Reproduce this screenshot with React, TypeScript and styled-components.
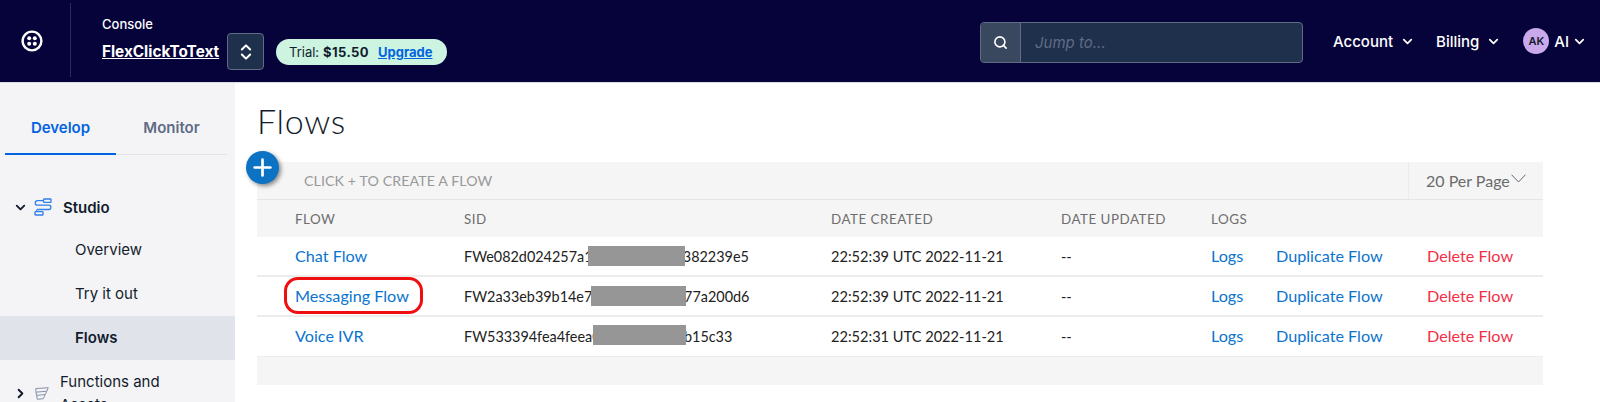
import React from "react";
import styled, { createGlobalStyle } from "styled-components";
import { ChevronDown, ChevronRight, ChevronsUpDown, Search, Plus } from "lucide-react";

const Global = createGlobalStyle`
  html, body { margin: 0; padding: 0; background: #fff; }
  body { width: 1600px; height: 402px; overflow: hidden; font-family: Inter, "Liberation Sans", sans-serif; }
  * { box-sizing: border-box; }
`;

const Page = styled.div`
  width: 1600px;
  height: 402px;
  display: flex;
  flex-direction: column;
  overflow: hidden;
`;

const TopBar = styled.header`
  flex: 0 0 83px;
  height: 83px;
  background: #06033a;
  border-bottom: 1px solid #dcdde4;
  display: flex;
  align-items: flex-start;
  color: #fff;
`;

const LogoCell = styled.div`
  width: 71px;
  height: 74px;
  margin-top: 3px;
  border-right: 1px solid #2b2c5a;
  display: flex;
  align-items: center;
  justify-content: center;
  padding: 2px 6px 0 0;
`;

const AccountBlock = styled.div`
  padding: 17px 0 0 31px;
  width: 909px;
  display: flex;
  flex-direction: column;
`;

const ConsoleLabel = styled.div`
  font-size: 13px;
  font-weight: 500;
  line-height: 14px;
`;

const AccountRow = styled.div`
  display: flex;
  align-items: center;
  margin-top: 2px;
`;

const AccountName = styled.a`
  font-size: 15.3px;
  font-weight: 700;
  text-decoration: underline;
  width: 119px;
  white-space: nowrap;
`;

const Switcher = styled.div`
  width: 37px;
  height: 37px;
  margin-left: 6px;
  background: #1f304c;
  border: 1px solid #606b85;
  border-radius: 4px;
  display: flex;
  align-items: center;
  justify-content: center;
`;

const TrialPill = styled.div`
  margin-left: 12px;
  height: 26px;
  width: 171px;
  padding-left: 13px;
  border-radius: 13px;
  background: #ccf4e0;
  color: #121c2d;
  font-size: 13px;
  display: flex;
  align-items: center;
  white-space: nowrap;
  strong { font-weight: 700; margin-left: 4px; font-size: 13px; letter-spacing: .4px; }
  a { color: #0263e0; font-weight: 700; text-decoration: underline; margin-left: 9px; }
`;

const SearchBox = styled.div`
  width: 323px;
  height: 41px;
  margin-top: 22px;
  border: 1px solid #606b85;
  border-radius: 4px;
  background: #1f304c;
  display: flex;
  overflow: hidden;
`;

const SearchIconCell = styled.div`
  width: 40px;
  background: #39475f;
  border-right: 1px solid #606b85;
  display: flex;
  align-items: center;
  justify-content: center;
`;

const SearchText = styled.div`
  padding-left: 14px;
  font-size: 15px;
  font-style: italic;
  color: #606b85;
  line-height: 39px;
`;

const NavArea = styled.nav`
  display: flex;
  align-items: center;
  height: 82px;
  margin-left: 30px;
  font-size: 15px;
  font-weight: 500;
`;

const NavItem = styled.div<{ $gap: number; $mr: number }>`
  display: flex;
  align-items: center;
  gap: ${(p) => p.$gap}px;
  margin-right: ${(p) => p.$mr}px;
  white-space: nowrap;
`;

const Avatar = styled.div`
  width: 26px;
  height: 26px;
  margin-right: 2px;
  border-radius: 50%;
  background: #c9a8ec;
  color: #121c2d;
  font-size: 11px;
  font-weight: 600;
  display: flex;
  align-items: center;
  justify-content: center;
`;

const Body = styled.div`
  flex: 1;
  display: flex;
  min-height: 0;
`;

const Sidebar = styled.aside`
  width: 235px;
  flex: 0 0 235px;
  background: #f4f4f6;
  overflow: hidden;
  padding-top: 20px;
`;

const Tabs = styled.div`
  margin: 0 8px 0 5px;
  display: flex;
  height: 52px;
  border-bottom: 1px solid #e1e3ea;
`;

const Tab = styled.div<{ $active?: boolean }>`
  width: 111px;
  height: 52px;
  font-size: 15px;
  font-weight: 600;
  line-height: 49px;
  text-align: center;
  color: ${(p) => (p.$active ? "#0263e0" : "#606b85")};
  border-bottom: ${(p) => (p.$active ? "2px solid #0263e0" : "none")};
`;

const SideHead = styled.div`
  display: flex;
  align-items: center;
  height: 24px;
  margin-top: 40px;
  padding-left: 13px;
  font-size: 15px;
  font-weight: 600;
  color: #121c2d;
`;

const SideIcon = styled.span`
  display: inline-flex;
  margin: 0 11px 0 6px;
`;

const SideLink = styled.div<{ $active?: boolean }>`
  height: 44px;
  padding-left: 75px;
  font-size: 15px;
  line-height: 44px;
  color: #121c2d;
  font-weight: ${(p) => (p.$active ? 600 : 400)};
  background: ${(p) => (p.$active ? "#e1e3ea" : "transparent")};
`;

const SideLinks = styled.div`
  margin-top: 9px;
`;

const SideGroup = styled.div`
  display: flex;
  padding: 10px 0 0 13px;
  font-size: 15px;
  line-height: 23px;
  color: #121c2d;
`;

const GroupIcons = styled.div`
  display: flex;
  align-items: center;
  height: 46px;
  gap: 7px;
  margin-right: 11px;
`;

const Main = styled.main`
  flex: 1;
  position: relative;
  padding: 0 57px 0 22px;
  font-family: Lato, "Open Sans", sans-serif;
`;

const Title = styled.h1`
  margin: 0;
  height: 79px;
  font-family: Lato, sans-serif;
  font-weight: 300;
  font-size: 34px;
  line-height: 75px;
  letter-spacing: .7px;
  color: #121c2d;
`;

const Fab = styled.div`
  position: absolute;
  left: 11px;
  top: 68px;
  width: 33px;
  height: 33px;
  border-radius: 50%;
  background: #0b72c4;
  box-shadow: 2px 2px 4px rgba(0, 0, 0, .45);
  display: flex;
  align-items: center;
  justify-content: center;
`;

const Toolbar = styled.div`
  height: 38px;
  background: #f5f5f5;
  border-bottom: 1px solid #e5e5e5;
  display: flex;
  justify-content: space-between;
  font-size: 14.2px;
  line-height: 37px;
`;

const Hint = styled.div`
  padding-left: 47px;
  color: #999;
  letter-spacing: .1px;
`;

const PerPage = styled.div`
  width: 135px;
  border-left: 1px solid #ebebeb;
  padding-left: 17px;
  color: #6b6b6b;
  font-size: 16px;
  display: flex;
  align-items: flex-start;
  white-space: nowrap;
`;

const PerPageCaret = styled.svg`
  margin: 12px 0 0 1px;
  flex: none;
`;

const RowGrid = styled.div<{ $h: number; $line?: boolean; $head?: boolean }>`
  position: relative;
  height: ${(p) => p.$h}px;
  display: grid;
  grid-template-columns: 38px 169px 367px 230px 150px 65px 151px 1fr;
  align-items: center;
  background: ${(p) => (p.$head ? "#f5f5f5" : "#fff")};
  border-bottom: ${(p) => (p.$line ? "2px solid #ececec" : "none")};
  font-size: ${(p) => (p.$head ? 13.4 : 14.4)}px;
  color: ${(p) => (p.$head ? "#6e6e6e" : "#222")};
  letter-spacing: ${(p) => (p.$head ? ".5px" : "0")};
  white-space: nowrap;
`;

const DateCell = styled.span`
  font-size: 14.6px;
`;

const Link = styled.a<{ $danger?: boolean }>`
  font-size: 16.2px;
  padding-bottom: 2px;
  color: ${(p) => (p.$danger ? "#f22f46" : "#0a74ce")};
`;

const Redact = styled.span`
  position: absolute;
  background: #969696;
  height: 20px;
`;

const Annotation = styled.div`
  position: absolute;
  left: 27px;
  top: 0;
  width: 139px;
  height: 37px;
  border: 3px solid #f00f0f;
  border-radius: 14px;
`;

const Footer = styled.div`
  height: 29px;
  background: #f5f5f5;
  border-top: 1px solid #ececec;
`;

const TwilioLogo = () => (
  <svg width="22" height="22" viewBox="0 0 22 22" aria-hidden="true">
    <circle cx="11" cy="11" r="9.4" fill="none" stroke="#fff" strokeWidth="2.4" />
    <circle cx="8.2" cy="8.2" r="2" fill="#fff" />
    <circle cx="13.8" cy="8.2" r="2" fill="#fff" />
    <circle cx="8.2" cy="13.8" r="2" fill="#fff" />
    <circle cx="13.8" cy="13.8" r="2" fill="#fff" />
  </svg>
);

const StudioIcon = () => (
  <svg width="18" height="18" viewBox="0 0 18 18" fill="none" stroke="#2f7fe6" strokeWidth="1.3" aria-hidden="true">
    <rect x="9.5" y="1" width="7.5" height="3.4" rx=".6" />
    <rect x="1" y="13.6" width="8" height="3.4" rx=".6" />
    <path d="M9.5 2.7H3.5a2.2 2.2 0 0 0 0 4.4h11.2a2.2 2.2 0 0 1 0 4.4H3.4a1.6 1.6 0 0 0-.6 2.1" />
  </svg>
);

const FunctionsIcon = () => (
  <svg width="14" height="13" viewBox="0 0 14 13" fill="none" stroke="#8891aa" strokeWidth="1" strokeLinejoin="round" aria-hidden="true">
    <path d="M.7 1.6 13.3.7 11.8 4.2 1 5.2zM1 5.2l.6 3.2 8.6-.9 1.6-3.3M1.6 8.4l.7 3.9 6-.6 1.9-4.2" />
  </svg>
);

const flows = [
  { name: "Chat Flow", sid: "FWe082d024257a1c0000000000382239e5", created: "22:52:39 UTC 2022-11-21", h: 40, top: 9, left: 331, w: 97, line: true },
  { name: "Messaging Flow", sid: "FW2a33eb39b14e70000000000077a200d6", created: "22:52:39 UTC 2022-11-21", h: 40, top: 9, left: 334, w: 95, line: true, mark: true },
  { name: "Voice IVR", sid: "FW533394fea4feea00000000006b15c33", created: "22:52:31 UTC 2022-11-21", h: 39, top: 8, left: 336, w: 93 },
];

export default function App() {
  return (
    <Page>
      <Global />
      <TopBar>
        <LogoCell><TwilioLogo /></LogoCell>
        <AccountBlock>
          <ConsoleLabel>Console</ConsoleLabel>
          <AccountRow>
            <AccountName>FlexClickToText</AccountName>
            <Switcher><ChevronsUpDown size={20} color="#fff" strokeWidth={2.4} /></Switcher>
            <TrialPill>Trial: <strong>$15.50</strong><a>Upgrade</a></TrialPill>
          </AccountRow>
        </AccountBlock>
        <SearchBox>
          <SearchIconCell><Search size={15} color="#fff" strokeWidth={2.6} /></SearchIconCell>
          <SearchText>Jump to...</SearchText>
        </SearchBox>
        <NavArea>
          <NavItem $gap={7} $mr={21}>Account <ChevronDown size={15} strokeWidth={2.8} /></NavItem>
          <NavItem $gap={7} $mr={22}>Billing <ChevronDown size={15} strokeWidth={2.8} /></NavItem>
          <NavItem $gap={3} $mr={0}><Avatar>AK</Avatar>AI <ChevronDown size={15} strokeWidth={2.8} /></NavItem>
        </NavArea>
      </TopBar>
      <Body>
        <Sidebar>
          <Tabs>
            <Tab $active>Develop</Tab>
            <Tab>Monitor</Tab>
          </Tabs>
          <SideHead>
            <ChevronDown size={15} strokeWidth={3} />
            <SideIcon><StudioIcon /></SideIcon>
            Studio
          </SideHead>
          <SideLinks>
            <SideLink>Overview</SideLink>
            <SideLink>Try it out</SideLink>
            <SideLink $active>Flows</SideLink>
          </SideLinks>
          <SideGroup>
            <GroupIcons>
              <ChevronRight size={15} strokeWidth={3} />
              <FunctionsIcon />
            </GroupIcons>
            <div>Functions and<br />Assets</div>
          </SideGroup>
        </Sidebar>
        <Main>
          <Title>Flows</Title>
          <Fab><Plus size={27} color="#fff" strokeWidth={2.4} /></Fab>
          <Toolbar>
            <Hint>CLICK + TO CREATE A FLOW</Hint>
            <PerPage>
              20 Per Page
              <PerPageCaret width="15" height="9" viewBox="0 0 15 9" fill="none" stroke="#666" strokeWidth="1">
                <path d="M.5.7 7.5 8 14.5.7" />
              </PerPageCaret>
            </PerPage>
          </Toolbar>
          <RowGrid $h={37} $head>
            <span />
            <span>FLOW</span>
            <span>SID</span>
            <span>DATE CREATED</span>
            <span>DATE UPDATED</span>
            <span>LOGS</span>
          </RowGrid>
          {flows.map((f) => (
            <RowGrid key={f.name} $h={f.h} $line={f.line}>
              <span />
              <Link>{f.name}</Link>
              <span>{f.sid}</span>
              <DateCell>{f.created}</DateCell>
              <span>--</span>
              <Link>Logs</Link>
              <Link>Duplicate Flow</Link>
              <Link $danger>Delete Flow</Link>
              <Redact style={{ left: f.left, width: f.w, top: f.top }} />
              {f.mark && <Annotation />}
            </RowGrid>
          ))}
          <Footer />
        </Main>
      </Body>
    </Page>
  );
}
